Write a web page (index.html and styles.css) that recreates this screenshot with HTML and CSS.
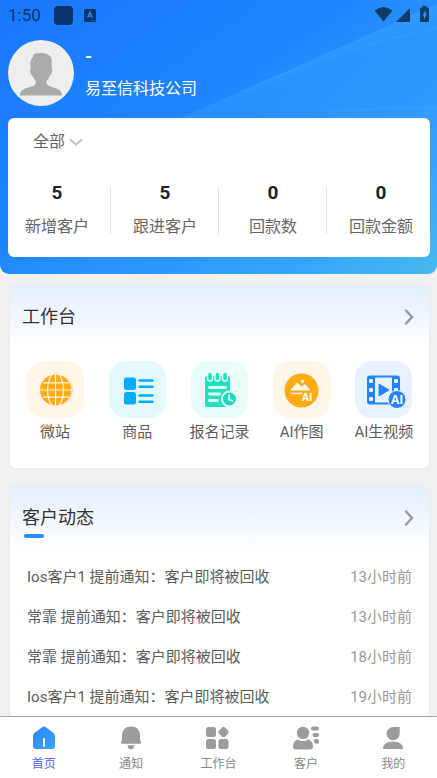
FILE: index.html
```html
<!DOCTYPE html>
<html lang="zh-CN">
<head>
<meta charset="utf-8">
<meta name="viewport" content="width=device-width, initial-scale=1">
<title>首页</title>
<link rel="stylesheet" href="styles.css">
</head>
<body>
<main class="content">
  <header class="hero">
    <svg class="hero-art" viewBox="0 0 437 274" preserveAspectRatio="none" aria-hidden="true">
      <defs>
        <linearGradient id="ray" gradientUnits="userSpaceOnUse" x1="290" y1="62" x2="325" y2="150">
          <stop offset="0" stop-color="#54b2ff" stop-opacity=".35"/>
          <stop offset=".2" stop-color="#38a5ff" stop-opacity=".25"/>
          <stop offset="1" stop-color="#38a5ff" stop-opacity="0"/>
        </linearGradient>
      </defs>
      <path fill="url(#ray)" d="M170 123Q310 61 437 4V180H100Z"/>
      <path fill="none" stroke="#6fc0ff" stroke-opacity=".1" stroke-width="2" d="M240 92Q340 48 437 28M330 112Q390 107 437 108"/>
    </svg>
    <div class="status">
      <span class="time">1:50</span>
      <span class="status-app"></span>
      <svg class="status-a" viewBox="0 0 12 13" aria-hidden="true"><rect width="12" height="13" rx="1.5" fill="#0b3569"/><path d="M3.700 8.800 6 3.200l2.300 5.600M4.500 7.200h3" fill="none" stroke="#2288fb" stroke-width="1.400"/><path d="M7 11.300h1.200M9.300 11.300h1.200" stroke="#2288fb" stroke-width=".8"/></svg>
      <svg class="status-signals" viewBox="0 0 56 18" aria-hidden="true" fill="#103c66">
        <path d="M.5 4.500Q9.500-2.500 18.500 4.500L9.500 15.500Z"/>
        <path d="M22 16 36 2v14Z"/>
        <path d="M48.500 0h4v1.500h1q1.500 0 1.500 1.500v11.500q0 1.500-1.500 1.500h-6q-1.500 0-1.500-1.500V3q0-1.500 1.500-1.500h1Z"/>
        <path fill="#2b9bfb" d="M51.500 4 48.500 9.500h1.500v4L53 7.800h-1.500Z"/>
      </svg>
    </div>
    <div class="profile">
      <svg class="avatar" viewBox="0 0 66 66" role="img" aria-label="头像">
        <circle cx="33" cy="33" r="33" fill="#eee"/>
        <path fill="#aaa" d="M25 17q0-3.500 3-3.500c4-1 16-1 15.800 7.500l-.2 7.500q1.200 0 .4 3.500-.6 3-1.800 3c-.8 3-3.700 5-3.700 7.500 0 3.500 5 4.300 9 5.500q6.500 1.800 6.500 7.500H12q0-5.700 6.500-7.500c4-1.200 9.500-2 9.500-5.500 0-2.500-3.200-4.500-4-7.500q-1.200 0-1.800-3-.6-3 .5-3.500c-.5-4-.7-9 2.300-11.500Z"/>
      </svg>
      <div class="identity">
        <strong class="name">-</strong>
        <span>易至信科技公司</span>
      </div>
    </div>
    <section class="stats">
      <button class="filter" type="button">全部
        <svg viewBox="0 0 14 8" aria-hidden="true"><path d="m1 1.500 6 5 6-5" fill="none" stroke="#bdc2cb" stroke-width="2"/></svg>
      </button>
      <dl class="figures">
        <div><dt>新增客户</dt><dd>5</dd></div>
        <div><dt>跟进客户</dt><dd>5</dd></div>
        <div><dt>回款数</dt><dd>0</dd></div>
        <div><dt>回款金额</dt><dd>0</dd></div>
      </dl>
    </section>
  </header>

  <section class="panel workbench">
    <div class="panel-head">
      <h2>工作台</h2>
      <a class="more" href="#" aria-label="更多工作台"><svg viewBox="0 0 10 18"><path d="m2 2.500 6 6.500-6 6.500"/></svg></a>
    </div>
    <nav class="tools">
      <a href="#">
        <svg viewBox="0 0 57 57" aria-hidden="true">
          <rect width="57" height="57" rx="17" fill="#fff6e9"/>
          <circle cx="31" cy="29" r="15" fill="#ffe0ac"/>
          <circle cx="28.500" cy="29" r="15.500" fill="#ffab13"/>
          <g fill="none" stroke="#fff6e9" stroke-width="1.200"><path d="M28.500 13v32M13 29h32M16 21.800h26M16 36.200h26"/><ellipse cx="28.500" cy="29" rx="8" ry="17"/></g>
        </svg>
        <span>微站</span>
      </a>
      <a href="#">
        <svg viewBox="0 0 57 57" aria-hidden="true">
          <rect width="57" height="57" rx="17" fill="#e3f9ff"/>
          <g fill="#03acff"><rect x="15" y="16.500" width="12" height="12.500" rx="2.500"/><rect x="15" y="31" width="12" height="12.500" rx="2.500"/></g>
          <path d="M30.500 19.500h13M30.500 25.800h13M30.500 34.500h13M30.500 40.700h13" stroke="#03acff" stroke-width="2.400" stroke-linecap="round"/>
        </svg>
        <span>商品</span>
      </a>
      <a href="#">
        <svg viewBox="0 0 57 57" aria-hidden="true">
          <rect width="57" height="57" rx="17" fill="#e7fdfa"/>
          <rect x="14" y="15" width="25" height="31" rx="2" fill="#1fe0c1"/>
          <g fill="#1fe0c1" stroke="#e7fdfa" stroke-width="1.500"><rect x="16.500" y="11" width="5" height="9" rx="2.500"/><rect x="24" y="11" width="5" height="9" rx="2.500"/><rect x="31.500" y="11" width="5" height="9" rx="2.500"/></g>
          <path d="M18.500 26.500h16M18.500 33h10M18.500 39.500h8" stroke="#e7fdfa" stroke-width="2.800" stroke-linecap="round"/>
          <circle cx="38.500" cy="38" r="7.500" fill="#1fd9bd" stroke="#e7fdfa" stroke-width="2"/>
          <path d="M38 34v4.500l3.500 1.500" fill="none" stroke="#e7fdfa" stroke-width="1.700" stroke-linecap="round"/>
        </svg>
        <span>报名记录</span>
      </a>
      <a href="#">
        <svg viewBox="0 0 57 57" aria-hidden="true">
          <rect width="57" height="57" rx="17" fill="#fff6e9"/>
          <circle cx="28.500" cy="29.500" r="17" fill="#ffab13"/>
          <path fill="#fff6e9" d="m17 29.500 7-8 4.500 4 3.500-2.500 5.500 6.500ZM29.500 18.500a1.700 1.700 0 1 1 0 3.400 1.700 1.700 0 0 1 0-3.400Z"/>
          <path d="M18.500 32.500h10" stroke="#fff6e9" stroke-width="1.600" stroke-linecap="round"/>
          <text class="mark mark-small" x="29" y="40">AI</text>
        </svg>
        <span>AI作图</span>
      </a>
      <a href="#">
        <svg viewBox="0 0 57 57" aria-hidden="true">
          <rect width="57" height="57" rx="17" fill="#e8f1ff"/>
          <rect x="12" y="14.500" width="33" height="29" rx="3" fill="#2683ff"/>
          <path d="M20 16.500h17v25H20Z" fill="#e8f1ff"/>
          <g fill="#e8f1ff"><rect x="14" y="18" width="4" height="4" rx="1"/><rect x="14" y="27" width="4" height="4" rx="1"/><rect x="14" y="36" width="4" height="4" rx="1"/><rect x="39" y="18" width="4" height="4" rx="1"/><rect x="39" y="27" width="4" height="4" rx="1"/></g>
          <path d="m24 23 10 6-10 6Z" fill="#2683ff" stroke="#2683ff" stroke-linejoin="round"/>
          <circle cx="42" cy="38.500" r="9" fill="#2683ff" stroke="#e8f1ff"/>
          <text class="mark" x="36" y="43">AI</text>
        </svg>
        <span>AI生视频</span>
      </a>
    </nav>
  </section>

  <section class="panel activity">
    <div class="panel-head">
      <h2 class="marked">客户动态</h2>
      <a class="more" href="#" aria-label="更多客户动态"><svg viewBox="0 0 10 18"><path d="m2 2.500 6 6.500-6 6.500"/></svg></a>
    </div>
    <ul class="feed">
      <li><span>Ios客户1 提前通知：客户即将被回收</span><time>13小时前</time></li>
      <li><span>常霏 提前通知：客户即将被回收</span><time>13小时前</time></li>
      <li><span>常霏 提前通知：客户即将被回收</span><time>18小时前</time></li>
      <li><span>Ios客户1 提前通知：客户即将被回收</span><time>19小时前</time></li>
    </ul>
  </section>
</main>

<nav class="tabs">
  <a class="active" href="#" aria-current="page">
    <svg viewBox="0 0 28 24" aria-hidden="true"><defs><linearGradient id="home" x1="0" y1="0" x2="1" y2="1"><stop stop-color="#2d82fb"/><stop offset="1" stop-color="#38a8ff"/></linearGradient></defs><path fill="url(#home)" d="M12.500 1q1.500-1 3 0l8 6q1.500 1.300 1.500 3v10q0 3-3 3H6q-3 0-3-3V10q0-1.700 1.500-3Z"/><path d="M14 13v7" stroke="#fff" stroke-width="2" stroke-linecap="round"/></svg>
    <span>首页</span>
  </a>
  <a href="#">
    <svg viewBox="0 0 28 24" aria-hidden="true" fill="#9c9c9c"><path d="M14 .5q8.500 0 9 9V14l1 2q.8 1.700-1 1.700H5q-1.800 0-1-1.700l1-2V9.500q.5-9 9-9ZM10.500 19.200h7q-.5 4-3.500 4t-3.500-4Z"/></svg>
    <span>通知</span>
  </a>
  <a href="#">
    <svg viewBox="0 0 28 24" aria-hidden="true" fill="#9c9c9c"><rect x="2" y="1" width="10" height="10" rx="2.500"/><rect x="2" y="13" width="10" height="10" rx="2.500"/><rect x="14.500" y="13" width="10" height="10" rx="2.500"/><rect x="15.300" y="1.800" width="8.500" height="8.500" rx="2" transform="rotate(45 19.500 6)"/></svg>
    <span>工作台</span>
  </a>
  <a href="#">
    <svg viewBox="0 0 28 24" aria-hidden="true" fill="#9c9c9c"><circle cx="11" cy="7" r="6.200"/><path d="M6 13.500q5 3 10 0 5 1.500 5 7 0 3-3 3H4q-3 0-3-3 0-5.500 5-7Z"/><rect x="19" y=".5" width="8" height="4" rx="2"/><rect x="20.500" y="7" width="6.500" height="4" rx="2"/><circle cx="24.500" cy="15.200" r="2.500"/></svg>
    <span>客户</span>
  </a>
  <a href="#">
    <svg viewBox="0 0 28 24" aria-hidden="true" fill="#9c9c9c"><path d="M14 1h6.700v6.500A6.600 6.600 0 1 1 14 1ZM4 23q0-7.500 10-7.500T24 23Z"/></svg>
    <span>我的</span>
  </a>
</nav>
</body>
</html>
```
FILE: styles.css
```css
* {
  box-sizing: border-box;
}

body {
  display: flex;
  flex-direction: column;
  height: 100vh;
  margin: 0;
  background: #f1f1f1;
  color: #5c5c5c;
  font-family: Roboto, "Noto Sans CJK SC", sans-serif;
  font-size: 15px;
  line-height: 20px;
}

a {
  color: inherit;
  text-decoration: none;
}

svg {
  display: block;
  flex: none;
}

.content {
  flex: 1;
  min-height: 0;
  overflow: hidden;
}

.hero {
  position: relative;
  padding: 0 7px 17px 8px;
  border-radius: 0 0 9px 9px;
  overflow: hidden;
  background: linear-gradient(145deg, #1976ff 0%, #1f86ff 42%, #39a4ff 82%, #48b9ed 100%);
}

.hero-art {
  position: absolute;
  inset: 0;
  width: 100%;
  height: 100%;
}

.status,
.profile,
.stats {
  position: relative;
}

.status {
  display: flex;
  align-items: center;
  height: 30px;
  color: #0b3569;
}

.time {
  font-size: 17px;
}

.status-app {
  width: 19px;
  height: 19px;
  margin: 0 11px 0 13px;
  border-radius: 4px;
  background: #0b3569;
}

.status-a {
  width: 12px;
  height: 13px;
}

.status-signals {
  width: 56px;
  height: 18px;
  margin-left: auto;
}

.profile {
  display: flex;
  align-items: center;
  gap: 11px;
  padding: 10px 0 12px;
  color: #fff;
  font-size: 16px;
}

.avatar {
  width: 66px;
  height: 66px;
}

.identity {
  display: flex;
  flex-direction: column;
  gap: 12px;
}

.name {
  font-size: 18px;
  font-weight: 700;
}

.stats {
  padding: 12px 0 18px;
  border-radius: 6px;
  background: #fff;
}

.filter {
  display: flex;
  align-items: center;
  gap: 4px;
  margin: 0 0 29px 25px;
  padding: 0;
  border: 0;
  background: none;
  color: #666;
  font: inherit;
  font-size: 16px;
  line-height: 24px;
}

.filter svg {
  width: 14px;
  height: 8px;
}

.figures {
  display: grid;
  grid-template-columns: repeat(4, 1fr);
  margin: 0 -5px;
}

.figures div {
  display: flex;
  flex-direction: column-reverse;
  gap: 12px;
  text-align: center;
  background: linear-gradient(#e3e3e3, #e3e3e3) right 4px / 1px 47px no-repeat;
}

.figures div:last-child {
  background: none;
}

.figures dt {
  font-size: 16px;
  line-height: 24px;
  color: #666;
}

.figures dd {
  margin: 0;
  color: #222;
  font-size: 19px;
  font-weight: 700;
}

.panel {
  margin: 11px 8px 0 10px;
  border-radius: 6px;
  background: linear-gradient(#e3eeff, #fff 64px);
  box-shadow: 0 0 4px rgba(0, 0, 0, 0.04);
}

.panel-head {
  display: flex;
  align-items: center;
  justify-content: space-between;
  height: 64px;
  padding: 0 15px 0 12px;
}

h2 {
  margin: 0;
  color: #333;
  font-size: 18px;
  font-weight: 400;
  line-height: 24px;
}

.marked {
  position: relative;
}

.marked::after {
  content: "";
  position: absolute;
  left: 2px;
  bottom: -8px;
  width: 20px;
  height: 4px;
  border-radius: 2px;
  background: #2c8dff;
}

.more svg {
  width: 10px;
  height: 18px;
  fill: none;
  stroke: #999;
  stroke-width: 2.5;
  stroke-linecap: round;
}

.workbench {
  padding-bottom: 26px;
}

.tools {
  display: grid;
  grid-template-columns: repeat(5, 1fr);
  padding: 12px 4px 0;
}

.tools a {
  display: flex;
  flex-direction: column;
  align-items: center;
  gap: 4px;
  white-space: nowrap;
}

.tools svg {
  width: 57px;
  height: 57px;
}

.mark {
  fill: #fff;
  font-family: "Open Sans", sans-serif;
  font-size: 12px;
  font-weight: 700;
}

.mark-small {
  font-size: 10px;
}

.activity {
  margin-top: 18px;
}

.feed {
  margin: 0;
  padding: 7px 17px 0;
  list-style: none;
}

.feed li {
  display: flex;
  align-items: center;
  justify-content: space-between;
  height: 40px;
}

.feed time {
  color: #999;
}

.tabs {
  position: relative;
  display: grid;
  grid-template-columns: repeat(5, 1fr);
  padding: 9px 0 4px;
  border-top: 1px solid #aaa;
  background: #fff;
  color: #888;
  font-size: 12px;
}

.tabs a {
  display: flex;
  flex-direction: column;
  align-items: center;
  gap: 4px;
}

.tabs svg {
  width: 28px;
  height: 24px;
}

.tabs .active {
  color: #4a67ef;
}
```
